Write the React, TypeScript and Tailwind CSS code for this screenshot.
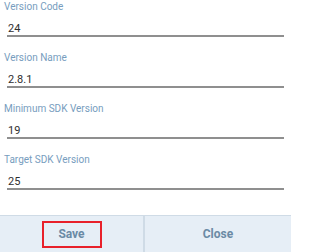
import React from 'react';

const fields = [
  { label: 'Version Code', value: '24' },
  { label: 'Version Name', value: '2.8.1' },
  { label: 'Minimum SDK Version', value: '19' },
  { label: 'Target SDK Version', value: '25' },
];

function Field({ label, value }: { label: string; value: string }) {
  return (
    <div className="flex flex-col h-[51px]">
      <div className="pl-[4px] pt-[1px] text-[10px] leading-[12px] text-[#779dbe]">{label}</div>
      <div className="ml-[7px] mr-[7px] mt-[9px] border-b-[2px] border-[#8f8f8f] h-[15px] pl-[1px] text-[11px] leading-[13px] text-[#2f2f2f]">
        {value}
      </div>
    </div>
  );
}

export default function App() {
  return (
    <div className="w-[291px] h-[252px] bg-white flex flex-col overflow-hidden" style={{ fontFamily: 'Roboto, "Liberation Sans", sans-serif' }}>
      <div className="flex flex-col">
        {fields.map((f) => (
          <Field key={f.label} label={f.label} value={f.value} />
        ))}
      </div>
      <div className="mt-auto flex h-[37px] border-t border-[#cfdbe6] bg-[#e6eef6]">
        <div className="w-[145px] flex items-center justify-center border-r-[2px] border-[#cfdbe6]">
          <div className="w-[60px] h-[27px] border-[2px] border-[#e8202a] flex items-center justify-center text-[12px] font-bold text-[#6a8aa5]">
            Save
          </div>
        </div>
        <div className="flex-1 flex items-center justify-center text-[12px] font-bold text-[#6a8aa5]">Close</div>
      </div>
    </div>
  );
}
